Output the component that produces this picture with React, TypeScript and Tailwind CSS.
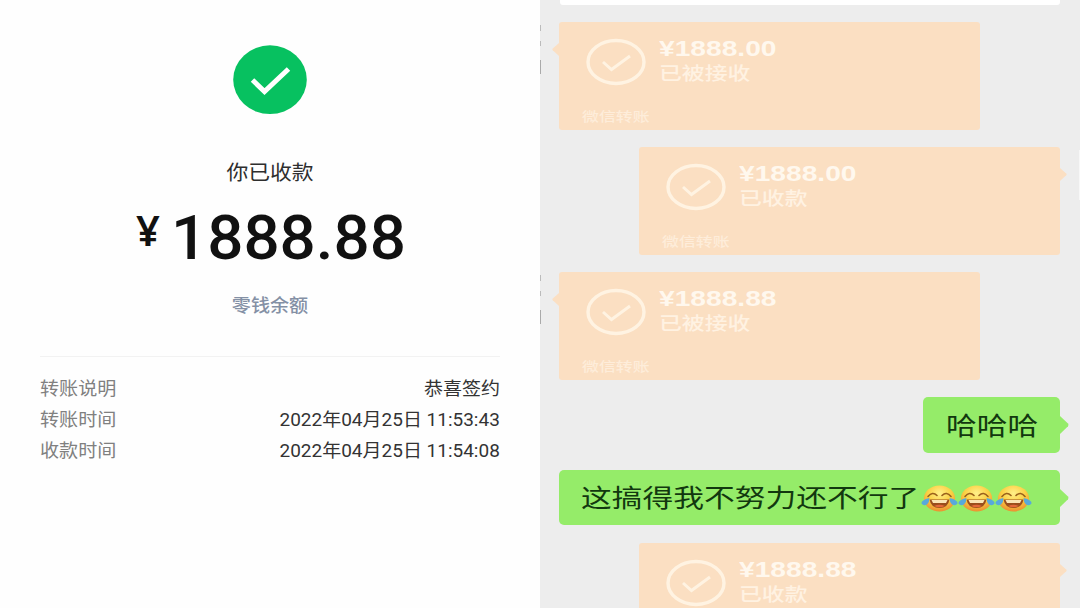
import clsx from "clsx"

interface TransferProps {
  side: "left" | "right"
  amount: string
  status: string
  className?: string
}

const details = [
  { label: "转账说明", value: "恭喜签约" },
  { label: "转账时间", value: "2022年04月25日 11:53:43" },
  { label: "收款时间", value: "2022年04月25日 11:54:08" },
]

function Receipt() {
  return (
    <section className="flex h-full w-[540px] shrink-0 flex-col items-center bg-[#fefefe] px-10 pt-[45px]">
      <svg width="74" height="70" viewBox="0 0 74 70">
        <ellipse cx="37" cy="34.7" rx="36.8" ry="34.4" fill="#07c160" />
        <path d="M19.5 35 L31.5 46.5 L55.5 24" fill="none" stroke="#fff" strokeWidth="5" />
      </svg>

      <div className="mt-[43px] h-[30px] origin-center scale-x-[1.09] text-[20px] leading-[30px] text-[#2e2e2e]">你已收款</div>

      <div className="mt-[12px] flex h-[74px] w-full items-start pl-[96px] text-[#111]">
        <span className="w-[35px] origin-left scale-x-[1.02] text-[41px] leading-[61px] font-semibold">¥</span>
        <span className="origin-left scale-x-[1.027] font-[Roboto,sans-serif] text-[62px] leading-[76px] font-medium">1888.88</span>
      </div>

      <div className="mt-[16px] h-[30px] scale-x-[1.06] text-[18px] leading-[30px] font-medium text-[#8490a5]">零钱余额</div>

      <div className="mt-[36px] h-px w-full bg-[#f2f2f2]" />

      <dl className="mt-[16px] w-full">
        {details.map((row) => (
          <div key={row.label} className="flex h-[31px] items-center justify-between text-[18px] leading-[31px]">
            <dt className="origin-left scale-x-[1.06] text-[#808080]">{row.label}</dt>
            <dd className="origin-right scale-x-[1.055] font-[Roboto,'Noto_Sans_CJK_SC',sans-serif] text-[#333]">{row.value}</dd>
          </div>
        ))}
      </dl>
    </section>
  )
}

function Tail({ side, className }: { side: "left" | "right"; className: string }) {
  return (
    <svg
      viewBox="0 0 9 18"
      preserveAspectRatio="none"
      className={clsx("absolute", side === "left" ? "right-full -scale-x-100" : "left-full", className)}
    >
      <path d="M0 0 L8 7.6 Q9 9 8 10.2 L0 18 Z" fill="currentColor" />
    </svg>
  )
}

function Transfer({ side, amount, status, className }: TransferProps) {
  return (
    <div
      className={clsx(
        "relative flex h-[108px] w-[421px] shrink-0 flex-col rounded-[3px] bg-[#fbdfc2]",
        side === "right" && "self-end",
        className
      )}
    >
      <Tail side={side} className="top-[21px] h-[13px] w-[7px] text-[#fbdfc2]" />
      <div className="flex h-[83px] pl-[27px]">
        <svg width="60" height="48" viewBox="0 0 60 48" className="mt-[16px] shrink-0">
          <ellipse cx="30" cy="24" rx="28" ry="21.5" fill="none" stroke="#fff3e2" strokeWidth="3.4" />
          <path d="M17 24 L25.5 31.5 L44 18" fill="none" stroke="#fff3e2" strokeWidth="3" />
        </svg>
        <div className="ml-[13px] pt-[14px] whitespace-nowrap">
          <div className="h-[26px] origin-left scale-x-[1.28] font-['Liberation_Sans',sans-serif] text-[22px] leading-[26px] font-bold text-[#fff8ee]">
            {amount}
          </div>
          <div className="h-[22px] origin-left scale-x-[1.27] text-[18px] leading-[22px] font-medium text-[#fff2e2]">{status}</div>
        </div>
      </div>
      <div className="w-[52px] origin-left translate-x-[23px] scale-x-[1.3] text-[13px] leading-[22px] font-medium text-[#feedda]">微信转账</div>
    </div>
  )
}

function JoyEmoji() {
  return (
    <svg width="37" height="30" viewBox="0 0 37 30" className="shrink-0" role="img" aria-label="笑哭">
      <defs>
        <radialGradient id="face" cx="0.5" cy="0.3" r="0.7">
          <stop offset="0" stopColor="#fff08a" />
          <stop offset="0.55" stopColor="#fbd043" />
          <stop offset="1" stopColor="#ec8f30" />
        </radialGradient>
      </defs>
      <ellipse cx="18.5" cy="15.5" rx="15.6" ry="13" fill="url(#face)" />
      <path d="M7 13.5 Q11.5 8 16 12.5 M21 12.5 Q25.5 8 30 13.5" fill="none" stroke="#9a611b" strokeWidth="1.6" strokeLinecap="round" />
      <path d="M8.5 16.5 H28.5 Q27 25 18.5 25 Q10 25 8.5 16.5 Z" fill="#9a4e1c" />
      <path d="M10.5 17 H26.5 L25 20 H12 Z" fill="#fbe5b4" />
      <path d="M13 23 Q18.5 20.5 24 23 Q18.5 25.4 13 23 Z" fill="#e4683a" />
      <path d="M8.5 15 Q0 17 0.5 20.5 Q2.5 23.4 6 21.4 Q8.5 19 8.5 15 Z" fill="#58a9dc" />
      <path d="M28.5 15 Q37 17 36.5 20.5 Q34.5 23.4 31 21.4 Q28.5 19 28.5 15 Z" fill="#58a9dc" />
    </svg>
  )
}

function Chat() {
  return (
    <section className="relative flex h-full w-[540px] shrink-0 flex-col gap-[17px] overflow-hidden bg-[#ededed] pr-5 pl-[19px]">
      {/* avatar edges cut off by the sides of the panel */}
      <i className="absolute top-[25px] left-0 h-[6px] w-px bg-[#bbb]" />
      <i className="absolute top-[41px] left-0 h-[5px] w-px bg-[#bbb]" />
      <i className="absolute top-[60px] left-0 h-[14px] w-px bg-[#aaa]" />
      <i className="absolute top-[275px] left-0 h-[6px] w-px bg-[#bbb]" />
      <i className="absolute top-[291px] left-0 h-[5px] w-px bg-[#bbb]" />
      <i className="absolute top-[310px] left-0 h-[14px] w-px bg-[#aaa]" />
      <i className="absolute top-[150px] right-0 h-[50px] w-px bg-[#f8f8f8]" />

      <div className="ml-px h-[5px] shrink-0 rounded-b-[3px] bg-white" />
      <Transfer side="left" amount="¥1888.00" status="已被接收" />
      <Transfer side="right" amount="¥1888.00" status="已收款" />
      <Transfer side="left" amount="¥1888.88" status="已被接收" />

      <div className="relative h-[56px] w-[137px] shrink-0 self-end rounded-[5px] bg-[#95ec69] pl-[23px] text-[25px] leading-[57px] text-[#12380f]">
        <Tail side="right" className="top-[19px] h-[18px] w-[9px] text-[#95ec69]" />
        <span className="inline-block origin-left scale-x-[1.23]">哈哈哈</span>
      </div>

      <div className="relative flex h-[55px] w-[501px] shrink-0 items-center self-end rounded-[5px] bg-[#95ec69] pl-[22px] text-[25px] leading-[55px] text-[#12380f]">
        <Tail side="right" className="top-[19px] h-[18px] w-[9px] text-[#95ec69]" />
        <span className="w-[340px] shrink-0 whitespace-nowrap">
          <span className="inline-block origin-left scale-x-[1.23]">这搞得我不努力还不行了</span>
        </span>
        <JoyEmoji />
        <JoyEmoji />
        <JoyEmoji />
      </div>

      <Transfer side="right" amount="¥1888.88" status="已收款" className="mt-px" />
    </section>
  )
}

export default function App() {
  return (
    <main className="flex h-[608px] w-[1080px] overflow-hidden font-['Noto_Sans','Noto_Sans_CJK_SC',sans-serif]">
      <Receipt />
      <Chat />
    </main>
  )
}
